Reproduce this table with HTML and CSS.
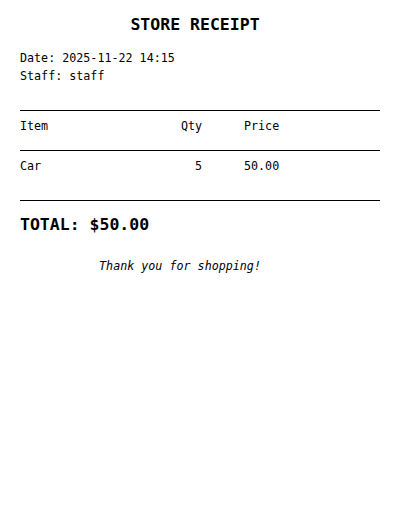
FILE: index.html
```html
<!DOCTYPE html>
<html>
<head>
<meta charset="utf-8">
<link rel="stylesheet" href="styles.css">
</head>
<body>
<div class="receipt">
  <h1 class="title">STORE RECEIPT</h1>
  <div class="meta">
    <div>Date: 2025-11-22 14:15</div>
    <div>Staff: staff</div>
  </div>
  <div class="items">
    <div class="row head">
      <span>Item</span><span class="qty">Qty</span><span class="price">Price</span>
    </div>
    <div class="row body">
      <span>Car</span><span class="qty">5</span><span class="price">50.00</span>
    </div>
  </div>
  <div class="total">TOTAL: $50.00</div>
  <div class="thanks">Thank you for shopping!</div>
</div>
</body>
</html>
```

FILE: styles.css
```css
html, body {
  margin: 0;
  padding: 0;
  background: #fff;
}
.receipt {
  font-family: "DejaVu Sans Mono", monospace;
  color: #000;
  padding: 15px 20px 0 20px;
  width: 360px;
  font-size: 11.7px;
  line-height: 18px;
}
.title {
  margin: 0 0 14px 0;
  font-size: 16.5px;
  line-height: 20px;
  font-weight: bold;
  text-align: center;
  padding-right: 10px;
}
.meta {
  margin-bottom: 25px;
}
.items {
  border-top: 1px solid #000;
  border-bottom: 1px solid #000;
}
.row {
  display: grid;
  grid-template-columns: 150px 32px 1fr;
}
.price {
  padding-left: 42px;
}
.row.head {
  padding: 6px 0 15px 0;
  border-bottom: 1px solid #000;
}
.row.body {
  padding: 6px 0 25px 0;
}
.qty {
  text-align: right;
}
.total {
  margin-top: 14px;
  font-size: 16.5px;
  line-height: 20px;
  font-weight: bold;
}
.thanks {
  margin-top: 22px;
  font-style: italic;
  text-align: center;
  padding-right: 40px;
}
```
